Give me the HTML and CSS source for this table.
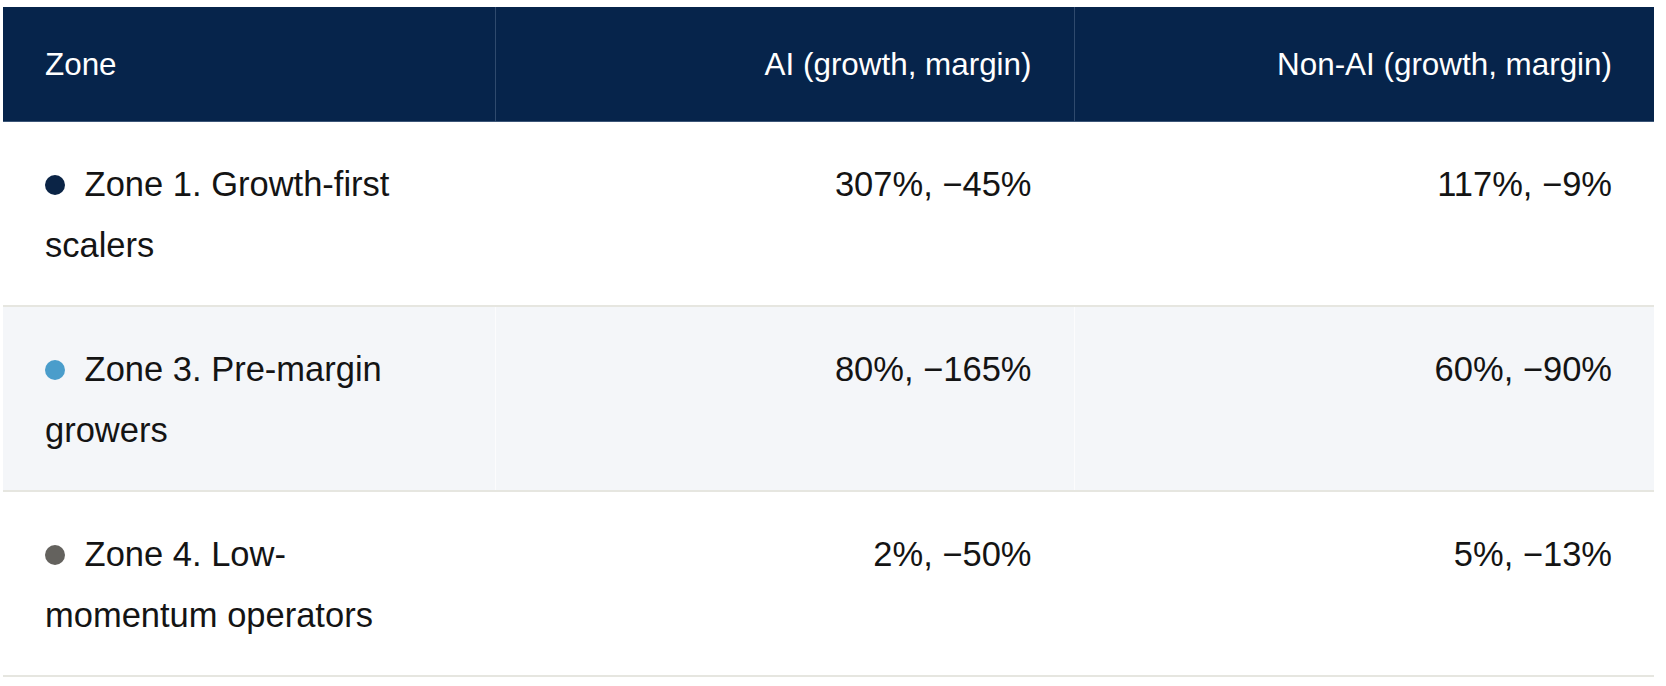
FILE: index.html
```html
<!DOCTYPE html>
<html lang="en">
<head>
<meta charset="utf-8">
<title>Zones</title>
<link rel="stylesheet" href="styles.css">
</head>
<body>
<table class="zones">
  <colgroup>
    <col class="c-zone">
    <col class="c-ai">
    <col class="c-nonai">
  </colgroup>
  <thead>
    <tr>
      <th class="left">Zone</th>
      <th class="num">AI (growth, margin)</th>
      <th class="num">Non-AI (growth, margin)</th>
    </tr>
  </thead>
  <tbody>
    <tr>
      <td class="left"><span class="dot dot-navy"></span> Zone 1. Growth-first scalers</td>
      <td class="num">307%, −45%</td>
      <td class="num">117%, −9%</td>
    </tr>
    <tr class="alt">
      <td class="left"><span class="dot dot-sky"></span> Zone 3. Pre-margin growers</td>
      <td class="num">80%, −165%</td>
      <td class="num">60%, −90%</td>
    </tr>
    <tr>
      <td class="left"><span class="dot dot-gray"></span> Zone 4. Low-momentum operators</td>
      <td class="num">2%, −50%</td>
      <td class="num">5%, −13%</td>
    </tr>
  </tbody>
</table>
</body>
</html>
```

FILE: styles.css
```css
html, body {
  margin: 0;
  padding: 0;
  background: #ffffff;
}

body {
  font-family: "Liberation Sans", Arial, sans-serif;
  color: #141414;
}

.zones {
  margin: 7px 0 0 3px;
  width: 1651px;
  border-collapse: collapse;
  table-layout: fixed;
}

.c-zone { width: 492px; }
.c-ai { width: 579px; }
.c-nonai { width: 580px; }

.zones th {
  background: #06244b;
  color: #ffffff;
  font-weight: normal;
  font-size: 31.4px;
  height: 114px;
  padding: 2px 42px 0;
  box-sizing: border-box;
  vertical-align: middle;
  border-bottom: 1px solid #3b5577;
}

.zones th + th {
  border-left: 1px solid #2f4a6d;
}

.zones td {
  font-size: 34.5px;
  line-height: 61px;
  padding: 32px 42px 29px;
  vertical-align: top;
  border-bottom: 2px solid #e6e6e0;
}

.zones td + td {
  border-left: 1px solid rgba(255, 255, 255, 0.7);
}

.zones .alt td {
  background: #f4f6f9;
}

.left { text-align: left; }
.num { text-align: right; }

.dot {
  display: inline-block;
  width: 20px;
  height: 20px;
  border-radius: 50%;
  margin-right: 10px;
  vertical-align: 1px;
}

.dot-navy { background: #0b2446; }
.dot-sky { background: #4a9dcb; }
.dot-gray { background: #64625e; }
```
